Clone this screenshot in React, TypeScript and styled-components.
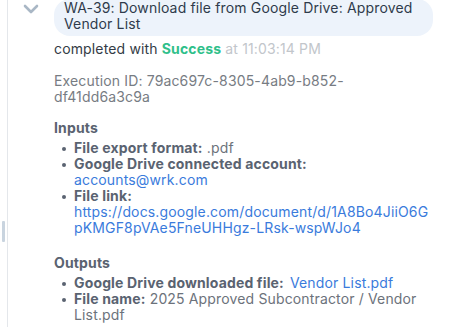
import React from "react";
import styled, { createGlobalStyle } from "styled-components";

const GlobalStyle = createGlobalStyle`
  html, body {
    margin: 0;
    padding: 0;
    background: #ffffff;
    overflow: hidden;
  }
  body {
    font-family: "Inter", "Open Sans", "Liberation Sans", sans-serif;
    font-size: 14px;
    line-height: 16px;
    letter-spacing: 0.15px;
    color: #333b47;
  }
`;

const Page = styled.div`
  position: relative;
  width: 452px;
  height: 327px;
  overflow: hidden;
`;

const ScrollHandle = styled.div`
  position: absolute;
  left: 2px;
  top: 221px;
  width: 3px;
  height: 21px;
  border-radius: 1px;
  background: #c9d4df;
`;

const Thread = styled.div`
  margin-left: 7px;
  min-height: 327px;
  border-left: 1px solid #e4e7eb;
  display: grid;
  grid-template-columns: 46px 1fr;
  align-items: start;
`;

const Toggle = styled.div`
  display: flex;
  justify-content: center;
  padding-top: 4px;
  color: #a9b7c5;
`;

const Body = styled.div`
  display: flex;
  flex-direction: column;
  margin-top: -1px;
`;

const Bubble = styled.div`
  width: 359px;
  padding: 1px 10px 4px;
  background: #edf3fb;
  border-radius: 16px;
  color: #2f3b4b;
`;

const Status = styled.div`
  margin-top: 5px;
  color: #343c46;
`;

const Success = styled.span`
  color: #2fbf8a;
  font-weight: 700;
`;

const Time = styled.span`
  color: #c2c6cb;
`;

const Execution = styled.div`
  margin-top: 16px;
  width: 330px;
  color: #777c83;
`;

const Section = styled.div<{ $space: number }>`
  margin-top: ${(p) => p.$space}px;
`;

const SectionTitle = styled.div`
  font-weight: 700;
  color: #5a6371;
  margin-bottom: 4px;
`;

const List = styled.ul`
  margin: 0;
  padding: 0 0 0 20px;
  list-style: none;
  width: 362px;
`;

const Item = styled.li`
  position: relative;
  color: #6c727b;
  &::before {
    content: "";
    position: absolute;
    left: -12px;
    top: 7px;
    width: 4px;
    height: 4px;
    border-radius: 50%;
    background: #5a6371;
  }
`;

const Label = styled.strong`
  font-weight: 700;
  color: #5a6371;
`;

const Link = styled.a<{ $gap?: boolean }>`
  color: #3a7bdc;
  text-decoration: none;
  margin-left: ${(p) => (p.$gap ? "6px" : "0")};
`;

function Chevron() {
  return (
    <svg width="16" height="10" viewBox="0 0 16 10">
      <path d="M2 2 L8 8 L14 2" fill="none" stroke="currentColor" strokeWidth="2.6" strokeLinecap="round" strokeLinejoin="round" />
    </svg>
  );
}

export default function App() {
  return (
    <Page>
      <GlobalStyle />
      <ScrollHandle />
      <Thread>
        <Toggle>
          <Chevron />
        </Toggle>
        <Body>
          <Bubble>WA-39: Download file from Google Drive: Approved Vendor List</Bubble>
          <Status>
            completed with <Success>Success</Success> <Time>at 11:03:14 PM</Time>
          </Status>
          <Execution>Execution ID: 79ac697c-8305-4ab9-b852-df41dd6a3c9a</Execution>
          <Section $space={15}>
            <SectionTitle>Inputs</SectionTitle>
            <List>
              <Item>
                <Label>File export format:</Label> .pdf
              </Item>
              <Item>
                <Label>Google Drive connected account:</Label>
                <br />
                <Link href="#">accounts@wrk.com</Link>
              </Item>
              <Item>
                <Label>File link:</Label>
                <br />
                <Link href="#">
                  https://docs.google.com/document/d/1A8Bo4JiiO6G<wbr />pKMGF8pVAe5FneUHHgz-LRsk-wspWJo4
                </Link>
              </Item>
            </List>
          </Section>
          <Section $space={19}>
            <SectionTitle>Outputs</SectionTitle>
            <List>
              <Item>
                <Label>Google Drive downloaded file:</Label>
                <Link href="#" $gap>Vendor List.pdf</Link>
              </Item>
              <Item>
                <Label>File name:</Label> 2025 Approved Subcontractor / Vendor List.pdf
              </Item>
            </List>
          </Section>
        </Body>
      </Thread>
    </Page>
  );
}
